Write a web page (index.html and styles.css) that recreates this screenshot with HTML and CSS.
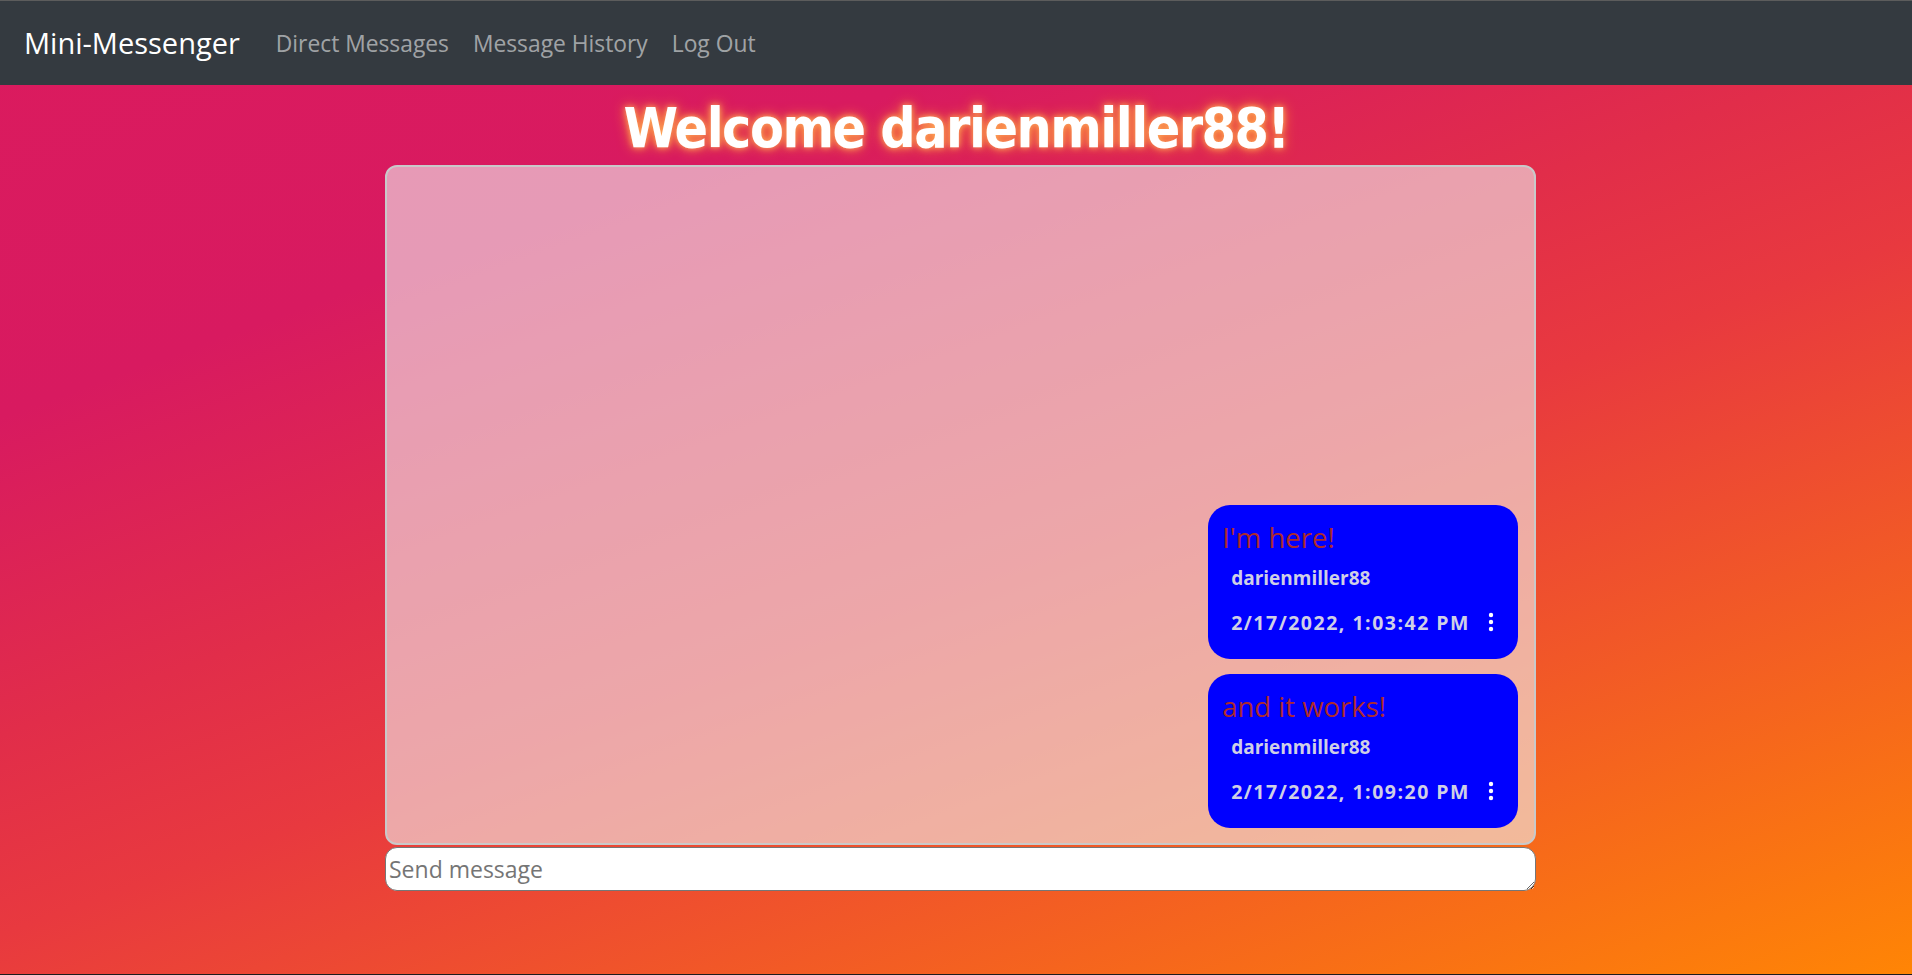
FILE: index.html
```html
<!DOCTYPE html>
<html lang="en">
<head>
<meta charset="utf-8">
<title>Mini-Messenger</title>
<link rel="stylesheet" href="styles.css">
</head>
<body>
<div class="page">
  <nav class="navbar">
    <a class="brand" href="#">Mini-Messenger</a>
    <a class="nav-link" href="#">Direct Messages</a>
    <a class="nav-link" href="#">Message History</a>
    <a class="nav-link" href="#">Log Out</a>
  </nav>
  <h1 class="welcome">Welcome darienmiller88!</h1>
  <main class="chat">
    <section class="chat-box">
      <div class="bubble">
        <div class="msg-text">I'm here!</div>
        <div class="msg-user">darienmiller88</div>
        <div class="msg-meta">
          <span class="msg-date">2/17/2022, 1:03:42 PM</span>
          <svg class="kebab" width="6" height="20" viewBox="0 0 6 20"><circle cx="3" cy="3" r="2.2" fill="#fff"/><circle cx="3" cy="10" r="2.2" fill="#fff"/><circle cx="3" cy="17" r="2.2" fill="#fff"/></svg>
        </div>
      </div>
      <div class="bubble">
        <div class="msg-text">and it works!</div>
        <div class="msg-user">darienmiller88</div>
        <div class="msg-meta">
          <span class="msg-date">2/17/2022, 1:09:20 PM</span>
          <svg class="kebab" width="6" height="20" viewBox="0 0 6 20"><circle cx="3" cy="3" r="2.2" fill="#fff"/><circle cx="3" cy="10" r="2.2" fill="#fff"/><circle cx="3" cy="17" r="2.2" fill="#fff"/></svg>
        </div>
      </div>
    </section>
    <textarea class="composer" placeholder="Send message"></textarea>
  </main>
</div>
</body>
</html>
```

FILE: styles.css
```css
* { box-sizing: border-box; }
html, body { margin: 0; padding: 0; }
body {
  font-family: "Open Sans", "Noto Sans", sans-serif;
}
.page {
  min-height: 100vh;
  border-bottom: 1px solid #1c1c1c;
  background: linear-gradient(160deg, #db1b5e 0%, #d81a60 25%, #e12d4a 44%, #e8393f 56%, #ff8505 100%);
}
.navbar {
  height: 85px;
  background: #343a40;
  border-top: 1px solid #5c5c5c;
  display: flex;
  align-items: center;
  padding: 0 0 0 24px;
}
.brand {
  color: #fff;
  text-decoration: none;
  font-size: 29px;
  margin-right: 24px;
  padding-bottom: 2px;
}
.nav-link {
  color: rgba(255, 255, 255, 0.55);
  text-decoration: none;
  font-size: 22.8px;
  padding: 0 12px;
}
.welcome {
  margin: 0;
  height: 80px;
  line-height: 86px;
  text-align: center;
  color: #fff;
  font-family: "DejaVu Sans Condensed", "DejaVu Sans", sans-serif;
  font-weight: bold;
  font-size: 55px;
  letter-spacing: -1.5px;
  text-shadow: 0 0 6px #ffb060, 0 0 14px #ff8c2a;
}
.chat {
  width: 1151px;
  margin-left: calc(50% - 571px);
  display: flex;
  flex-direction: column;
  gap: 2px;
}
.chat-box {
  height: 680px;
  border: 2px solid #c9c9c9;
  border-radius: 12px;
  background: rgba(240, 240, 240, 0.6);
  display: flex;
  flex-direction: column;
  justify-content: flex-end;
  align-items: flex-end;
  gap: 15px;
  padding: 15px 16px;
}
.bubble {
  background: #0000ff;
  border-radius: 22px;
  padding: 15px 24px 15px 14px;
}
.msg-text {
  color: #ad2b2b;
  font-size: 27.5px;
  line-height: 36px;
}
.msg-user, .msg-meta {
  color: #cfcfe6;
  font-weight: bold;
  font-size: 19px;
  padding-left: 9px;
}
.msg-user { line-height: 44px; }
.msg-meta {
  display: flex;
  align-items: center;
  height: 44px;
}
.msg-date {
  font-size: 19.5px;
  letter-spacing: 1.5px;
}
.kebab { margin-left: 18px; }
.composer {
  display: block;
  width: 100%;
  height: 44px;
  border: 1px solid #767676;
  border-radius: 12px;
  background: #fff;
  padding: 4px 3px 0;
  font-family: "Open Sans", "Noto Sans", sans-serif;
  font-size: 23px;
  line-height: 34px;
  resize: vertical;
}
.composer::placeholder { color: #757575; }
```
